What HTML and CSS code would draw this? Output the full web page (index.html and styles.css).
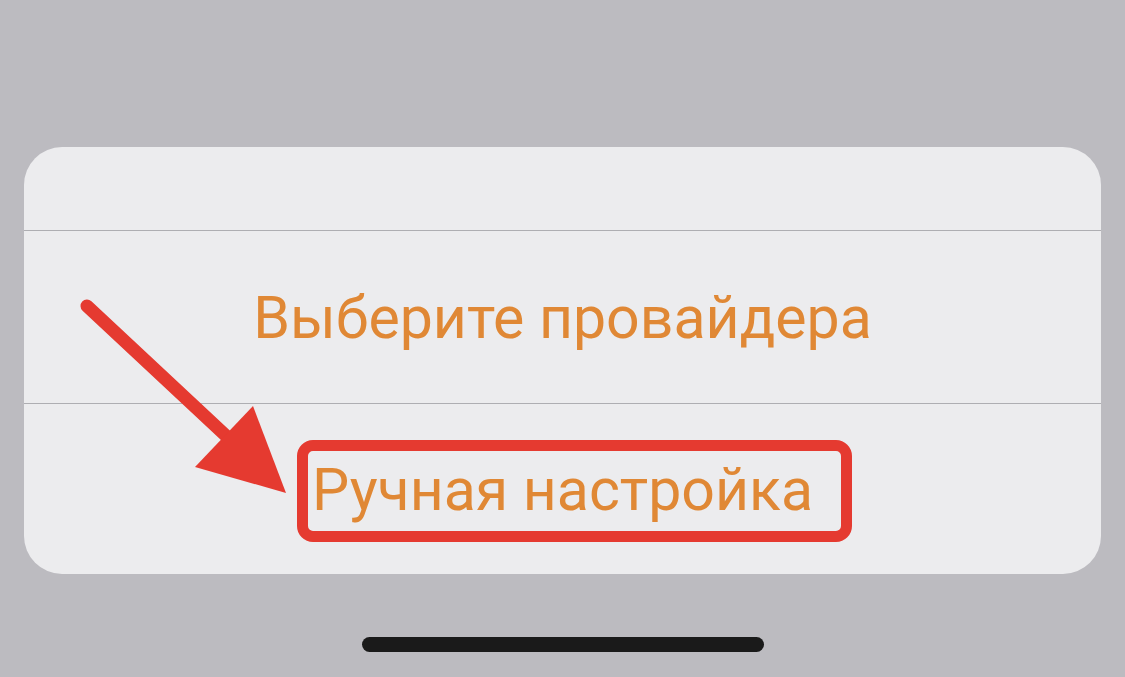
FILE: index.html
```html
<!DOCTYPE html>
<html lang="ru">
<head>
  <meta charset="UTF-8" />
  <meta name="viewport" content="width=device-width, initial-scale=1.0"/>
  <title>Выберите провайдера</title>
  <link rel="stylesheet" href="styles.css">
</head>
<body>

  <div class="screen">
    <div class="sheet">
      <div class="sheet-head"></div>
      <div class="sheet-row">
        <span class="option">Выберите провайдера</span>
      </div>
      <div class="sheet-row">
        <span class="option marked">Ручная настройка</span>
      </div>
    </div>

    <div class="home-bar"></div>

    <!-- annotation arrow -->
    <svg class="arrow" width="1125" height="677" viewBox="0 0 1125 677">
      <line x1="87" y1="306" x2="238" y2="447" stroke="#e53a30" stroke-width="13" stroke-linecap="round"/>
      <polygon points="286,493 195,467 253,406" fill="#e53a30"/>
    </svg>
  </div>

</body>
</html>
```

FILE: styles.css
```css
* {
  box-sizing: border-box;
}

html, body {
  margin: 0;
  height: 100%;
}

body {
  background-color: #bcbbc0;
  font-family: Roboto, "Noto Sans", Arial, sans-serif;
}

.screen {
  position: relative;
  width: 1125px;
  height: 677px;
  padding: 147px 24px 0 24px;
}

.sheet {
  background-color: #ececee;
  border-radius: 38px;
  overflow: hidden;
  display: flex;
  flex-direction: column;
}

.sheet-head {
  height: 84px;
  border-bottom: 1px solid #aeaeb2;
}

.sheet-row {
  height: 172px;
  display: flex;
  align-items: center;
  justify-content: center;
}

.sheet-row + .sheet-row {
  border-top: 1px solid #aeaeb2;
  height: 171px;
}

.option {
  position: relative;
  color: #e08835;
  font-size: 59px;
  line-height: 1;
}

.option.marked::after {
  content: "";
  position: absolute;
  left: -15px;
  right: -39px;
  top: -20px;
  bottom: -23px;
  border: 11px solid #e53a30;
  border-radius: 16px;
}

.home-bar {
  width: 402px;
  height: 15px;
  margin: 63px auto 0;
  background-color: #1a1a1a;
  border-radius: 8px;
}

.arrow {
  position: absolute;
  left: 0;
  top: 0;
  pointer-events: none;
}
```
